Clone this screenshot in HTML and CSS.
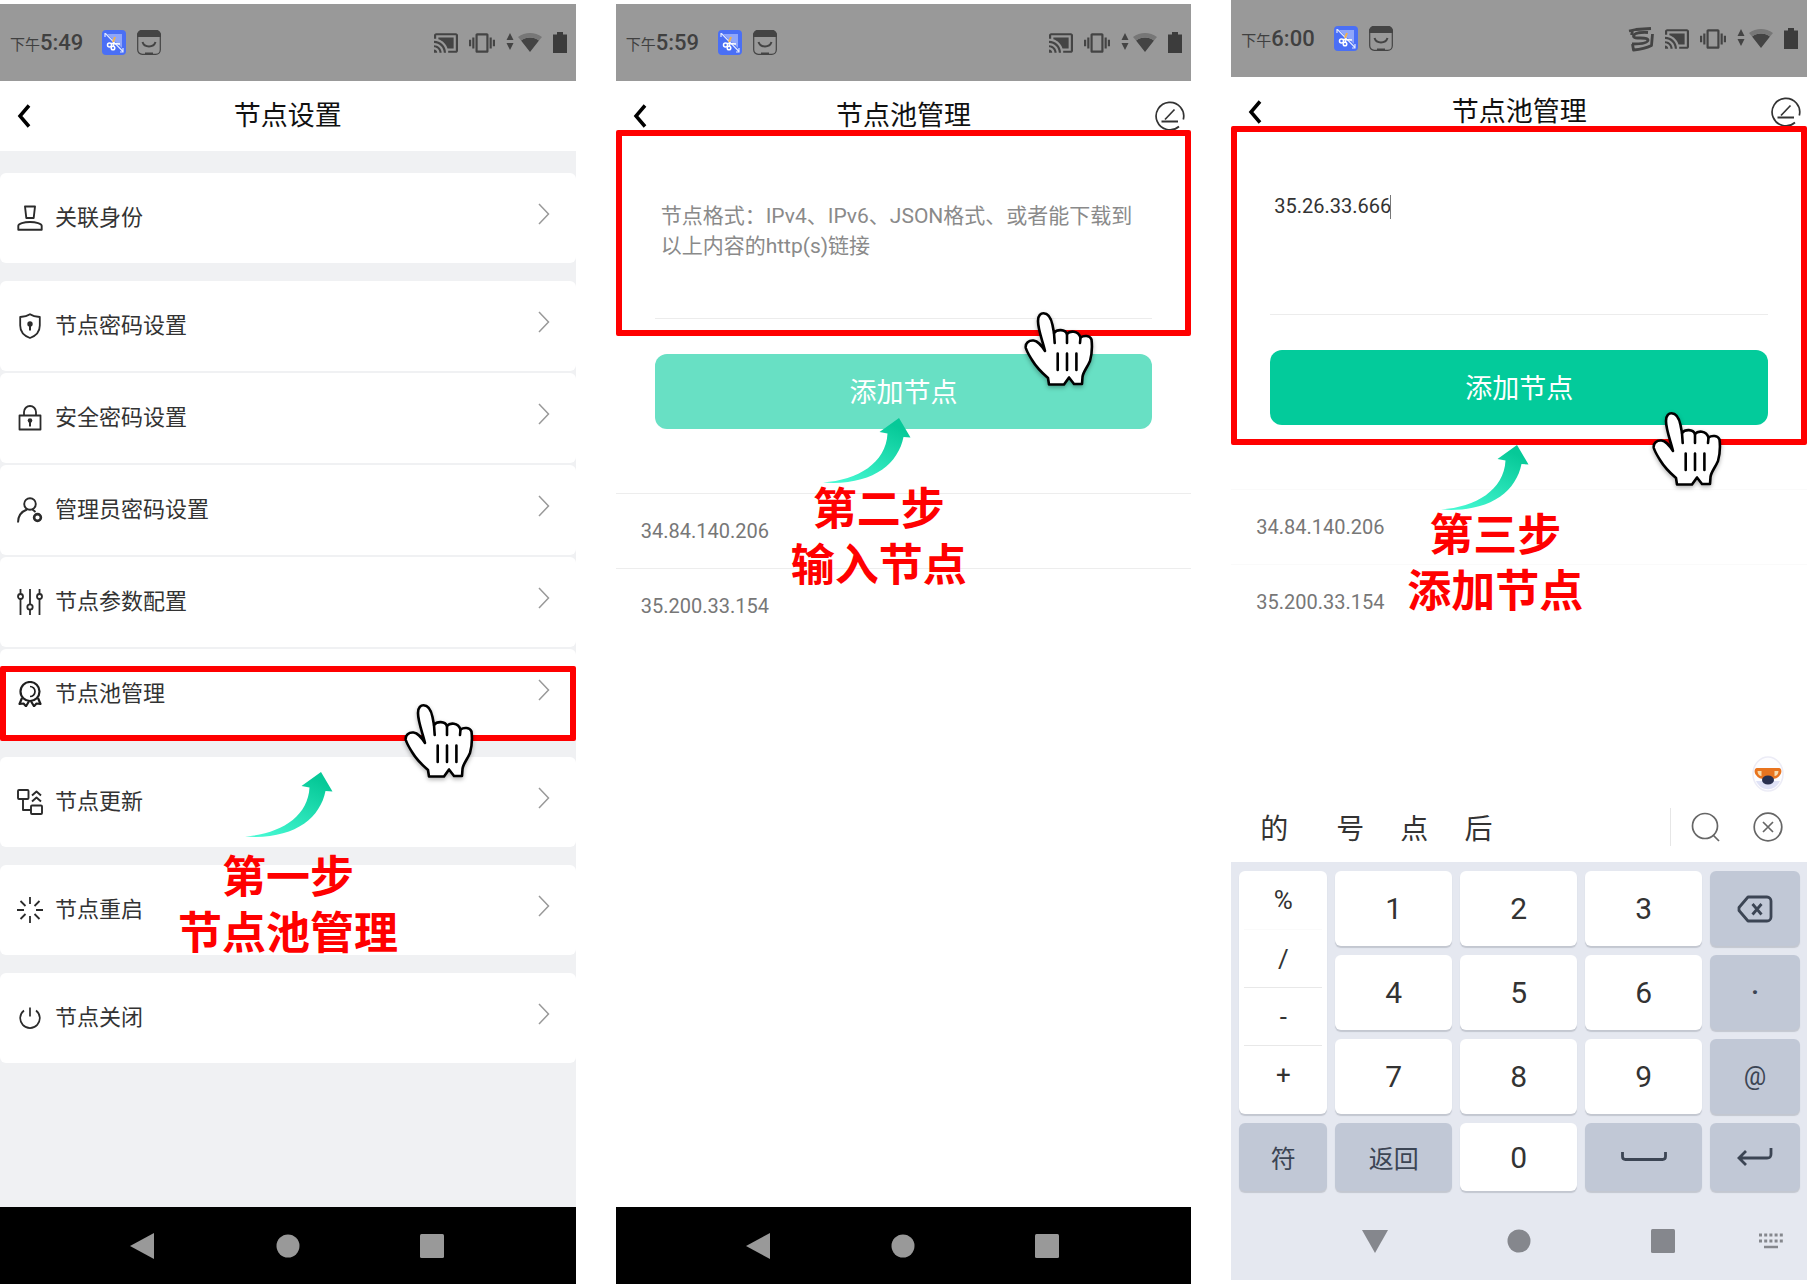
FILE: index.html
```html
<!DOCTYPE html>
<html lang="zh-CN">
<head>
<meta charset="utf-8">
<meta name="viewport" content="width=device-width, initial-scale=1">
<title>节点池管理教程</title>
<link rel="stylesheet" href="styles.css">
</head>
<body>
<svg class="sprite" aria-hidden="true">
  <defs>
    <linearGradient id="arrow-fill" x1="0.2" y1="1" x2="0.8" y2="0.1">
      <stop offset="0" stop-color="#45f8d2"/>
      <stop offset="1" stop-color="#06c998"/>
    </linearGradient>
  </defs>
  <symbol id="i-shot" viewBox="0 0 24 25">
    <rect width="24" height="25" rx="4" fill="#4a6ff5"/>
    <path d="M3 7V3.500h1M21 18v4h-3M3.500 3.500L21 21.500" fill="none" stroke="#dfe7ff" stroke-width="1.200"/>
    <path d="M5 4h15v14z" fill="#8fa6fa"/>
    <g fill="none" stroke="#fff" stroke-width="1.500"><circle cx="7.500" cy="15" r="2"/><circle cx="11" cy="18" r="1.800"/><path d="M9 13.500l9 .5M11.500 16V9"/></g>
    <path d="M11 12l2-5" stroke="#f2b04a" stroke-width="2"/>
  </symbol>
  <symbol id="i-pocket" viewBox="0 0 24 25">
    <rect x=".7" y=".7" width="22.600" height="23.600" rx="4.500" fill="none" stroke="#444" stroke-width="1.200"/>
    <path d="M0 7V5a5 5 0 0 1 5-5h14a5 5 0 0 1 5 5v2zM8 22.500h8V25H8z" fill="#444"/>
    <path d="M5.500 12c2 6 11 6 13 0" fill="none" stroke="#444" stroke-width="2"/>
  </symbol>
  <symbol id="i-cast" viewBox="1 3 22 18">
    <path fill="#444" d="M1 18v3h3c0-1.660-1.340-3-3-3zm0-4v2c2.760 0 5 2.240 5 5h2c0-3.870-3.130-7-7-7zm18-7H5v1.630c3.960 1.280 7.090 4.410 8.370 8.370H19V7zM1 10v2c4.970 0 9 4.030 9 9h2c0-6.080-4.930-11-11-11zm20-7H3c-1.100 0-2 .9-2 2v3h2V5h18v14h-7v2h7c1.100 0 2-.9 2-2V5c0-1.100-.9-2-2-2z"/>
  </symbol>
  <symbol id="i-vibrate" viewBox="0 3 24 18">
    <path fill="#444" d="M0 15h2V9H0v6zm3 2h2V7H3v10zm19-8v6h2V9h-2zm-3 8h2V7h-2v10zM16.500 3h-9C6.670 3 6 3.670 6 4.500v15c0 .83.67 1.500 1.500 1.500h9c.83 0 1.500-.67 1.500-1.500v-15c0-.83-.67-1.500-1.500-1.500zM16 19H8V5h8v14z"/>
  </symbol>
  <symbol id="i-net" viewBox="0 0 36 20">
    <path fill="#444" d="M4 0l3.500 7h-7zM4 17L.5 10h7zM24 19l-9-11.500c5-4 13-4 18 0z"/>
    <path fill="#777" d="M12 4c7-5.300 17-5.300 24 0l-3 3.500c-5-4-13-4-18 0z"/>
  </symbol>
  <symbol id="i-battery" viewBox="0 0 14 21">
    <path fill="#3c3c3c" d="M0 2.500h4V0h6v2.500h4V21H0z"/>
  </symbol>
  <symbol id="i-sogou" viewBox="0 0 26 26">
    <g fill="none" stroke="#444" stroke-width="2.800" stroke-linejoin="round"><path d="M23 2.500L8 3.500 1 5M20 6.500C13 6 6 7 5.500 10c0 4 14 0 14.500 4 0 3.500-8 4-16 4M4.500 5L3.500 9"/><path d="M4.500 18l1 6c6-.5 12-1.500 18-4.500L24.500 8"/></g>
  </symbol>
  <symbol id="i-back" viewBox="0 0 14 24">
    <path d="M12 1.500L3 12l9 10.500" fill="none" stroke="#000" stroke-width="3.500"/>
  </symbol>
  <symbol id="i-edit" viewBox="0 0 30 30">
    <g fill="none" stroke="#333" stroke-width="1.700"><path d="M24 25.500A13.800 13.800 0 1 1 28.300 18.500"/><path d="M19.500 8.500L10 18.500"/><path d="M6.500 20.500H23" stroke-width="2"/></g>
  </symbol>
  <symbol id="i-go" viewBox="0 0 12 22">
    <path d="M1 1l9.500 10L1 21" fill="none" stroke="#999" stroke-width="1.500"/>
  </symbol>
  <symbol id="i-stamp" viewBox="0 0 26 26">
    <g fill="none" stroke="#2b2b2b" stroke-width="1.900" stroke-linejoin="round"><path d="M8 1.500h10l-1.300 11.500H9.300z"/><path d="M1.300 24.800v-4C1.300 18.500 7 17 13 17s11.700 1.500 11.700 3.800v4z"/></g>
  </symbol>
  <symbol id="i-shield" viewBox="0 0 26 26">
    <path d="M13 1.200c3 2 6 2.500 9.800 2.800v8.500c0 6-4.300 10.500-9.800 12.500-5.500-2-9.800-6.500-9.800-12.500V4C7 3.700 10 3.200 13 1.200z" fill="none" stroke="#2b2b2b" stroke-width="1.800" stroke-linejoin="round"/>
    <circle cx="13" cy="11" r="2.700" fill="#2b2b2b"/><path d="M13 11v6.500" stroke="#2b2b2b" stroke-width="2"/>
  </symbol>
  <symbol id="i-lock" viewBox="0 0 26 26">
    <path d="M2.500 10.500h21v14h-21zM7 10V7a6 6 0 0 1 12 0v3" fill="none" stroke="#2b2b2b" stroke-width="1.800" stroke-linejoin="round"/>
    <circle cx="13" cy="15.500" r="2.300" fill="#2b2b2b"/><path d="M13 15v6.500" stroke="#2b2b2b" stroke-width="2"/>
  </symbol>
  <symbol id="i-admin" viewBox="0 0 26 26">
    <g fill="none" stroke="#2b2b2b" stroke-width="1.900"><circle cx="13" cy="7" r="5.800"/><path d="M1 25.500c0-6 3.500-11 9-13M15.500 12.500l3 2.500"/><circle cx="20.500" cy="20.500" r="3.400" stroke-width="2.600"/></g>
  </symbol>
  <symbol id="i-sliders" viewBox="0 0 26 26">
    <g fill="none" stroke="#2b2b2b" stroke-width="1.800"><path d="M3.500 0v5M3.500 10v16M13 0v15M13 21v5M22.500 0v5M22.500 10v16"/><circle cx="3.500" cy="7.500" r="2.500"/><circle cx="13" cy="18" r="2.700"/><circle cx="22.500" cy="7.500" r="2.500"/></g>
  </symbol>
  <symbol id="i-medal" viewBox="0 0 26 26">
    <g fill="none" stroke="#1f1f1f" stroke-width="2.200" stroke-linejoin="round"><circle cx="13" cy="10.500" r="9.500"/><path d="M13 5.500a5 5 0 0 1 0 10" stroke-width="1.700"/><path d="M5 17l-2.500 6 4-.5 2.500 2.700 3-5M21 17l2.500 6-4-.5-2.500 2.700-3-5"/></g>
  </symbol>
  <symbol id="i-update" viewBox="0 0 26 26">
    <g fill="none" stroke="#2b2b2b" stroke-width="1.900" stroke-linejoin="round"><rect x="1" y="1" width="10.500" height="9" rx="1"/><rect x="14" y="16.500" width="11" height="8.500" rx="1"/><path d="M6 10v11h8M15 6.500L19.500 2.500 24 6.500M15 12.500l4.500-4 4.500 4"/></g>
  </symbol>
  <symbol id="i-burst" viewBox="0 0 26 26">
    <path d="M13 0v7M13 19v7M0 13h7M19 13h7M3.500 4l5 5M17.500 17l5 5M22.500 4l-5 5M8.500 17l-5 5" stroke="#2b2b2b" stroke-width="1.800"/>
  </symbol>
  <symbol id="i-power" viewBox="0 0 26 26">
    <path d="M13 2.500v9M7 5.500a9.800 9.800 0 1 0 12 0" fill="none" stroke="#2b2b2b" stroke-width="1.700"/>
  </symbol>
  <symbol id="i-arrow" viewBox="0 0 88 66">
    <path d="M76 0L87.500 19.500 80.500 19C75 47 48 68 0 64.500 35 62 63 45 64.500 15.500L56.500 14z" fill="url(#arrow-fill)"/>
  </symbol>
  <symbol id="i-hand" viewBox="0 0 70 76">
    <g stroke="#000" stroke-width="2.600" stroke-linejoin="round" stroke-linecap="round"><path fill="#fff" d="M21 39C19 30 14 18 14 9 14 3 17 1.300 19.500 1.300 24 1.300 27 6 28.500 13L30 21C33 17 41 17 43 22 46 18.500 54 18.500 56.500 25.500 60 23 66 23.500 67.500 27.500 68.500 36 68 42 66 49 63 56 59 60 58.500 65L58 72H50L45 65.500 40 72.500H25L24 66C17 60 11 53 8 48 5 43 3 40 1.800 36 1 31 5 28 9.500 28.500 14 29 17 33 21 39z"/><path fill="none" d="M30 21l.7 10M43 22v9M56.500 25.500L56 31M33.700 41.500V58M43 41.500V58M52.400 41.500V58"/></g>
  </symbol>
  <symbol id="i-nav-back" viewBox="0 0 28 26"><path d="M24 0v26L0 13z" fill="currentColor"/></symbol>
  <symbol id="i-nav-down" viewBox="0 0 26 24"><path d="M0 1h26L13 24z" fill="currentColor"/></symbol>
  <symbol id="i-nav-home" viewBox="0 0 24 24"><circle cx="12" cy="12" r="11.500" fill="currentColor"/></symbol>
  <symbol id="i-nav-recent" viewBox="0 0 24 24"><rect width="24" height="24" rx="1.500" fill="currentColor"/></symbol>
  <symbol id="i-nav-keys" viewBox="0 0 26 16">
    <path d="M1 2h24M1 8h24" stroke="currentColor" stroke-width="3" stroke-dasharray="3 2.200"/><path d="M6 14h14" stroke="currentColor" stroke-width="2.500"/>
  </symbol>
  <symbol id="i-search" viewBox="0 0 30 30">
    <g fill="none" stroke="#666" stroke-width="1.700"><circle cx="14" cy="14" r="12.500"/><path d="M22 23l6 6"/></g>
  </symbol>
  <symbol id="i-close" viewBox="0 0 30 30">
    <g fill="none" stroke="#666" stroke-width="1.700"><circle cx="15" cy="15" r="13.800"/><path d="M10 10l10 10M20 10L10 20"/></g>
  </symbol>
  <symbol id="i-mascot" viewBox="0 0 32 36">
    <ellipse cx="16" cy="18" rx="15" ry="17" fill="#fdfdff" stroke="#ececf6" stroke-width="1.500"/>
    <path d="M4 25c5 11 19 11 24 0z" fill="#dfe2f6"/>
    <path d="M5 12h22c3 0 3 5 1 7-2 3-5 4-8 4h-8c-3 0-6-1-8-4-2-2-2-7 1-7z" fill="#e8741f"/>
    <path d="M5.500 15h4v5c-2 0-4-2-4-5zM22.500 15h4c0 3-2 5-4 5z" fill="#f7dcae"/>
    <ellipse cx="16" cy="24" rx="6" ry="4.500" fill="#29304f"/>
  </symbol>
  <symbol id="i-delete" viewBox="0 0 36 28">
    <g fill="none" stroke="#3c4554" stroke-width="2.800" stroke-linejoin="round"><path d="M11 2h19a4 4 0 0 1 4 4v16a4 4 0 0 1-4 4H11L2 15.500v-3z"/><path d="M15.500 9l9 10.500M24.500 9l-9 10.500"/></g>
  </symbol>
  <symbol id="i-space" viewBox="0 0 46 12">
    <path d="M1.500 1v4.500c0 2 1 3 3 3h37c2 0 3-1 3-3V1" fill="none" stroke="#3c4554" stroke-width="2.800"/>
  </symbol>
  <symbol id="i-enter" viewBox="0 0 36 20">
    <path d="M34 1v6c0 3-1 4-4 4H2M9 4l-7 7 7 7" fill="none" stroke="#3c4554" stroke-width="2.800"/>
  </symbol>
</svg>

<main class="board">

  <section class="phone" aria-label="第一步">
    <div class="status">
      <p class="time"><small>下午</small>5:49</p>
      <svg class="app-icon"><use href="#i-shot"/></svg>
      <svg class="app-icon"><use href="#i-pocket"/></svg>
      <div class="status-right">
        <svg class="ic-cast"><use href="#i-cast"/></svg>
        <svg class="ic-vibrate"><use href="#i-vibrate"/></svg>
        <svg class="ic-net"><use href="#i-net"/></svg>
        <svg class="ic-battery"><use href="#i-battery"/></svg>
      </div>
    </div>
    <header class="bar">
      <button class="icon-btn" aria-label="返回"><svg class="ic-back"><use href="#i-back"/></svg></button>
      <h1>节点设置</h1>
    </header>
    <nav class="settings" aria-label="节点设置">
      <ul class="group">
        <li><a class="row" href="#identity"><svg class="row-icon"><use href="#i-stamp"/></svg><span>关联身份</span><svg class="row-go"><use href="#i-go"/></svg></a></li>
      </ul>
      <ul class="group">
        <li><a class="row" href="#node-password"><svg class="row-icon"><use href="#i-shield"/></svg><span>节点密码设置</span><svg class="row-go"><use href="#i-go"/></svg></a></li>
        <li><a class="row" href="#security-password"><svg class="row-icon"><use href="#i-lock"/></svg><span>安全密码设置</span><svg class="row-go"><use href="#i-go"/></svg></a></li>
        <li><a class="row" href="#admin-password"><svg class="row-icon"><use href="#i-admin"/></svg><span>管理员密码设置</span><svg class="row-go"><use href="#i-go"/></svg></a></li>
        <li><a class="row" href="#parameters"><svg class="row-icon"><use href="#i-sliders"/></svg><span>节点参数配置</span><svg class="row-go"><use href="#i-go"/></svg></a></li>
        <li><a class="row" href="#pool"><svg class="row-icon"><use href="#i-medal"/></svg><span>节点池管理</span><svg class="row-go"><use href="#i-go"/></svg></a></li>
      </ul>
      <ul class="group">
        <li><a class="row" href="#update"><svg class="row-icon"><use href="#i-update"/></svg><span>节点更新</span><svg class="row-go"><use href="#i-go"/></svg></a></li>
      </ul>
      <ul class="group">
        <li><a class="row" href="#restart"><svg class="row-icon"><use href="#i-burst"/></svg><span>节点重启</span><svg class="row-go"><use href="#i-go"/></svg></a></li>
      </ul>
      <ul class="group">
        <li><a class="row" href="#shutdown"><svg class="row-icon"><use href="#i-power"/></svg><span>节点关闭</span><svg class="row-go"><use href="#i-go"/></svg></a></li>
      </ul>
    </nav>
    <div class="navbar">
      <button class="icon-btn" aria-label="返回"><svg class="ic-tri"><use href="#i-nav-back"/></svg></button>
      <button class="icon-btn" aria-label="主页"><svg class="ic-nav"><use href="#i-nav-home"/></svg></button>
      <button class="icon-btn" aria-label="最近"><svg class="ic-nav"><use href="#i-nav-recent"/></svg></button>
    </div>
    <div class="frame frame-1"></div>
    <svg class="arrow arrow-1"><use href="#i-arrow"/></svg>
    <svg class="hand hand-1"><use href="#i-hand"/></svg>
    <p class="step step-1">第一步<br>节点池管理</p>
  </section>

  <section class="phone" aria-label="第二步">
    <div class="status">
      <p class="time"><small>下午</small>5:59</p>
      <svg class="app-icon"><use href="#i-shot"/></svg>
      <svg class="app-icon"><use href="#i-pocket"/></svg>
      <div class="status-right">
        <svg class="ic-cast"><use href="#i-cast"/></svg>
        <svg class="ic-vibrate"><use href="#i-vibrate"/></svg>
        <svg class="ic-net"><use href="#i-net"/></svg>
        <svg class="ic-battery"><use href="#i-battery"/></svg>
      </div>
    </div>
    <header class="bar">
      <button class="icon-btn" aria-label="返回"><svg class="ic-back"><use href="#i-back"/></svg></button>
      <h1>节点池管理</h1>
      <button class="icon-btn edit" aria-label="编辑"><svg class="ic-edit"><use href="#i-edit"/></svg></button>
    </header>
    <div class="pool">
      <form class="add">
        <textarea aria-label="节点" placeholder="节点格式：IPv4、IPv6、JSON格式、或者能下载到以上内容的http(s)链接"></textarea>
        <button class="submit pale" type="button">添加节点</button>
      </form>
      <ul class="nodes">
        <li>34.84.140.206</li>
        <li>35.200.33.154</li>
      </ul>
    </div>
    <div class="navbar">
      <button class="icon-btn" aria-label="返回"><svg class="ic-tri"><use href="#i-nav-back"/></svg></button>
      <button class="icon-btn" aria-label="主页"><svg class="ic-nav"><use href="#i-nav-home"/></svg></button>
      <button class="icon-btn" aria-label="最近"><svg class="ic-nav"><use href="#i-nav-recent"/></svg></button>
    </div>
    <div class="frame frame-2"></div>
    <svg class="arrow arrow-2"><use href="#i-arrow"/></svg>
    <svg class="hand hand-2"><use href="#i-hand"/></svg>
    <p class="step step-2">第二步<br>输入节点</p>
  </section>

  <section class="phone raised" aria-label="第三步">
    <div class="status">
      <p class="time"><small>下午</small>6:00</p>
      <svg class="app-icon"><use href="#i-shot"/></svg>
      <svg class="app-icon"><use href="#i-pocket"/></svg>
      <div class="status-right">
        <svg class="ic-sogou"><use href="#i-sogou"/></svg>
        <svg class="ic-cast"><use href="#i-cast"/></svg>
        <svg class="ic-vibrate"><use href="#i-vibrate"/></svg>
        <svg class="ic-net"><use href="#i-net"/></svg>
        <svg class="ic-battery"><use href="#i-battery"/></svg>
      </div>
    </div>
    <header class="bar">
      <button class="icon-btn" aria-label="返回"><svg class="ic-back"><use href="#i-back"/></svg></button>
      <h1>节点池管理</h1>
      <button class="icon-btn edit" aria-label="编辑"><svg class="ic-edit"><use href="#i-edit"/></svg></button>
    </header>
    <div class="pool">
      <form class="add filled">
        <textarea aria-label="节点">35.26.33.666</textarea>
        <span class="caret"></span>
        <button class="submit" type="button">添加节点</button>
      </form>
      <ul class="nodes faint">
        <li>34.84.140.206</li>
        <li>35.200.33.154</li>
      </ul>
    </div>
    <div class="ime">
      <svg class="mascot"><use href="#i-mascot"/></svg>
      <div class="candidates">
        <button>的</button><button>号</button><button>点</button><button>后</button>
        <div class="ime-tools">
          <button class="icon-btn" aria-label="搜索"><svg class="ic-tool"><use href="#i-search"/></svg></button>
          <button class="icon-btn" aria-label="关闭"><svg class="ic-tool"><use href="#i-close"/></svg></button>
        </div>
      </div>
      <div class="keys">
        <div class="symbols"><button>%</button><button class="soft">/</button><button>-</button><button>+</button></div>
        <button class="key">1</button><button class="key">2</button><button class="key">3</button>
        <button class="key dark" aria-label="删除"><svg class="ic-delete"><use href="#i-delete"/></svg></button>
        <button class="key">4</button><button class="key">5</button><button class="key">6</button>
        <button class="key dark"><b>·</b></button>
        <button class="key">7</button><button class="key">8</button><button class="key">9</button>
        <button class="key dark">@</button>
        <button class="key dark">符</button><button class="key dark">返回</button><button class="key">0</button>
        <button class="key dark" aria-label="空格"><svg class="ic-space"><use href="#i-space"/></svg></button>
        <button class="key dark" aria-label="换行"><svg class="ic-enter"><use href="#i-enter"/></svg></button>
      </div>
    </div>
    <div class="navbar light">
      <button class="icon-btn" aria-label="收起"><svg class="ic-tri-down"><use href="#i-nav-down"/></svg></button>
      <button class="icon-btn" aria-label="主页"><svg class="ic-nav"><use href="#i-nav-home"/></svg></button>
      <button class="icon-btn" aria-label="最近"><svg class="ic-nav"><use href="#i-nav-recent"/></svg></button>
      <button class="icon-btn" aria-label="键盘"><svg class="ic-keys"><use href="#i-nav-keys"/></svg></button>
    </div>
    <div class="frame frame-3"></div>
    <svg class="arrow arrow-3"><use href="#i-arrow"/></svg>
    <svg class="hand hand-3"><use href="#i-hand"/></svg>
    <p class="step step-3">第三步<br>添加节点</p>
  </section>

</main>
</body>
</html>
```

FILE: styles.css
```css
* { box-sizing: border-box; }

body {
  margin: 0;
  background: #fff;
  color: #333;
  font-family: Roboto, "Noto Sans CJK SC", sans-serif;
}

p, h1, ul { margin: 0; padding: 0; }
ul { list-style: none; }
svg { display: block; flex: none; }
.sprite { position: absolute; width: 0; height: 0; }

button {
  margin: 0;
  padding: 0;
  border: 0;
  background: none;
  color: inherit;
  font: inherit;
}

.icon-btn { display: flex; align-items: center; justify-content: center; }

.board {
  display: grid;
  grid-template-columns: repeat(3, minmax(0, 1fr));
  gap: 40px;
  min-height: 100vh;
}

.phone {
  position: relative;
  display: flex;
  flex-direction: column;
  margin-top: 4px;
}
.phone.raised { margin: 0 0 4px; }

/* status bar */
.status {
  display: flex;
  align-items: center;
  gap: 11px;
  height: 77px;
  padding: 0 9px 0 10px;
  background: #999;
  color: #404040;
}
.time { margin-right: 8px; padding-top: 2px; font-size: 22px; line-height: 26px; font-weight: 500; white-space: nowrap; }
.time small { font-size: 15px; font-weight: 400; }
.status-right { display: flex; align-items: center; gap: 11px; margin-left: auto; }
.app-icon { width: 24px; height: 25px; }
.ic-cast { width: 24px; height: 20px; }
.ic-vibrate { width: 26px; height: 20px; }
.ic-net { width: 36px; height: 20px; }
.ic-battery { width: 14px; height: 21px; }
.ic-sogou { width: 26px; height: 26px; }

/* title bar */
.bar {
  display: grid;
  grid-template-columns: 48px 1fr 48px;
  align-items: center;
  height: 70px;
  color: #111;
}
.bar h1 { font-size: 27px; line-height: 36px; font-weight: 400; text-align: center; }
.ic-back { width: 14px; height: 24px; }
.ic-edit { width: 30px; height: 30px; }
.bar .edit { justify-content: flex-end; padding-right: 6px; }

/* settings list */
.settings {
  display: flex;
  flex: 1;
  flex-direction: column;
  gap: 18px;
  padding-top: 22px;
  background: #f0f1f3;
}
.group { display: grid; gap: 2px; }
.row {
  display: flex;
  align-items: center;
  gap: 12px;
  height: 90px;
  padding: 0 26px 0 17px;
  border-radius: 6px;
  background: #fff;
  color: #333;
  font-size: 22px;
  line-height: 30px;
  text-decoration: none;
}
.row-icon { width: 26px; height: 26px; }
.row-go { width: 12px; height: 22px; margin: 0 0 8px auto; }

/* node pool */
.pool { flex: 1; }
.add {
  position: relative;
  display: flex;
  flex-direction: column;
  gap: 35px;
  padding: 0 39px;
}
.add textarea {
  height: 168px;
  padding: 50px 6px 0;
  border: 0;
  border-bottom: 1px solid #ececec;
  outline: 0;
  resize: none;
  overflow: hidden;
  background: none;
  color: #333;
  font: 20px/30px Roboto, "Noto Sans CJK SC", sans-serif;
}
.add textarea::placeholder { color: #8a8a8a; font-size: 21px; opacity: 1; }
.filled textarea { padding: 44px 4px 0; }
.caret {
  position: absolute;
  top: 48px;
  left: 159px;
  width: 1px;
  height: 24px;
  background: #777;
}
.submit {
  height: 75px;
  padding-bottom: 2px;
  border-radius: 12px;
  background: #03cb9b;
  color: #fff;
  font-size: 27px;
}
.submit.pale { background: #68e0c4; }
.nodes { margin-top: 64px; }
.nodes li {
  height: 75px;
  padding-left: 25px;
  border-top: 1px solid #ededed;
  color: #777;
  font-size: 20px;
  line-height: 74px;
}
.nodes.faint li { border-color: #fafafa; }

/* input method */
.ime { display: flex; flex-direction: column; }
.mascot { width: 32px; height: 36px; margin: 0 23px 0 auto; }
.candidates {
  display: flex;
  align-items: center;
  gap: 36px;
  height: 70px;
  padding: 0 24px 0 29px;
  font-size: 28px;
}
.candidates > button:first-child { margin-right: 12px; }
.ime-tools {
  display: flex;
  align-items: center;
  gap: 32px;
  height: 38px;
  margin-left: auto;
  padding-left: 20px;
  border-left: 1px solid #e6e6e6;
}
.ic-tool { width: 30px; height: 30px; }
.keys {
  display: grid;
  grid-template-columns: 88fr 117fr 117fr 117fr 90fr;
  grid-template-rows: repeat(3, 75px) 68px;
  gap: 9px 8px;
  padding: 9px 7px 11px 8px;
  background: #e5e8f0;
}
.symbols, .key {
  border-radius: 6px;
  background: #fff;
  box-shadow: 0 2px 1px #c3c7d0;
  color: #333;
}
.key { display: flex; align-items: center; justify-content: center; font-size: 30px; }
.key.dark { background: #c1c8d6; color: #3c4554; font-size: 25px; }
.symbols {
  display: grid;
  grid-row: span 3;
  grid-template-rows: repeat(4, 58px);
  padding: 0 5px;
  font-size: 26px;
}
.symbols button + button { border-top: 1px solid #e8e8e8; }
.symbols button.soft { border-color: #fafafa; }
.ic-delete { width: 36px; height: 28px; }
.ic-space { width: 46px; height: 12px; }
.ic-enter { width: 36px; height: 20px; }

/* system navigation */
.navbar {
  display: grid;
  grid-template-columns: repeat(3, 2fr) 1fr;
  height: 77px;
  padding-left: 12.5%;
  background: #000;
  color: #999;
}
.navbar.light { height: 78px; background: #e5e8f0; color: #85878d; }
.ic-tri { width: 28px; height: 26px; }
.ic-tri-down { width: 26px; height: 24px; }
.ic-nav { width: 24px; height: 24px; }
.ic-keys { width: 26px; height: 16px; }

/* tutorial marks over the screens */
.frame { position: absolute; left: 0; right: 0; border: 6px solid #f00; border-radius: 2px; pointer-events: none; }
.frame-1 { top: 662px; height: 75px; }
.frame-2 { top: 126px; height: 206px; }
.frame-3 { top: 126px; height: 319px; }

.arrow { position: absolute; width: 88px; height: 66px; }
.arrow-1 { top: 768px; left: 245px; }
.arrow-2 { top: 414px; left: 207px; }
.arrow-3 { top: 445px; left: 210px; }

.hand { position: absolute; width: 70px; height: 76px; filter: drop-shadow(0 2px 2px rgba(0, 0, 0, .3)); }
.hand-1 { top: 700px; left: 404px; }
.hand-2 { top: 308px; left: 408px; }
.hand-3 { top: 412px; left: 421px; }

.step {
  position: absolute;
  width: 240px;
  color: #f00;
  font-size: 44px;
  line-height: 56px;
  font-weight: 700;
  text-align: center;
}
.step-1 { top: 846px; left: 168px; }
.step-2 { top: 478px; left: 143px; }
.step-3 { top: 508px; left: 144px; }
```
